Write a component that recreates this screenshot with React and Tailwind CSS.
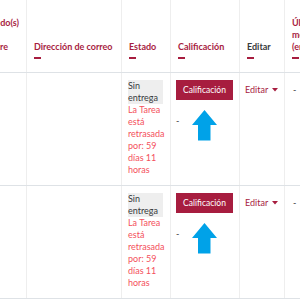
const RED = 'text-[#a71d3f]'

function Dash({ hide }) {
  return <div className={`mt-[4px] h-[2px] w-[7px] ${hide ? '' : 'bg-[#a71d3f]'}`} />
}

function HeadCell({ w, children, dark, clip }) {
  return (
    <div className={`flex h-[72px] shrink-0 flex-col justify-end overflow-hidden border-r border-[#eeeeee] pb-[13px] ${clip ? 'pr-[7px]' : 'px-[7px]'} ${w}`}>
      <div className={`whitespace-nowrap text-[9px] font-bold leading-[12px] ${dark ? 'text-[#373a3c]' : RED} ${clip ? 'text-right' : ''}`}>{children}</div>
      <Dash hide={clip} />
    </div>
  )
}

function Arrow() {
  return (
    <svg width="27" height="31" viewBox="0 0 27 31" className="ml-[12px] -mt-[5px]">
      <path d="M13.5 0 L26 15 L19.5 15 L19.5 30.5 L7 30.5 L7 15 L1 15 Z" fill="#00a2e8" />
    </svg>
  )
}

function Row() {
  return (
    <div className="flex h-[113px] border-b border-[#dee2e6] text-[9px] leading-[12px]">
      <div className="w-[27px] shrink-0 border-r border-[#eeeeee]" />
      <div className="w-[95px] shrink-0 border-r border-[#eeeeee]" />
      <div className="w-[49px] shrink-0 border-r border-[#eeeeee] pl-[6px] pt-[7px]">
        <div className="w-[35px] bg-[#eeeeee] text-[#373a3c]">Sin<br />entrega</div>
        <div className="text-[#f4505c]">La Tarea<br />está<br />retrasada<br />por: 59<br />días 11<br />horas</div>
      </div>
      <div className="w-[69px] shrink-0 border-r border-[#eeeeee] pl-[5px] pt-[7px]">
        <div className="flex h-[20px] w-[57px] items-center justify-center bg-[#a71d3f] text-[8.5px] text-white">Calificación</div>
        <div className="mt-[15px] flex items-start">
          <span className="text-[#373a3c]">-</span>
          <Arrow />
        </div>
      </div>
      <div className="w-[45px] shrink-0 border-r border-[#eeeeee] pl-[5px] pt-[11px]">
        <span className="flex items-center gap-[4px] text-[#a71d3f]">Editar
          <svg width="6" height="4" viewBox="0 0 6 4"><path d="M0 0 L6 0 L3 3.5 Z" fill="#a71d3f" /></svg>
        </span>
      </div>
      <div className="pl-[8px] pt-[11px] text-[#373a3c]">-</div>
    </div>
  )
}

export default function App() {
  return (
    <div className="h-[300px] w-[300px] overflow-hidden bg-white" style={{ fontFamily: 'Lato, "Open Sans", sans-serif' }}>
      <div className="w-[330px]">
        <div className="flex border-b border-[#dee2e6]">
          <HeadCell w="w-[27px]" clip>
            <div>do(s)</div>
            <div>&nbsp;</div>
            <div className="pr-[11px]">re</div>
          </HeadCell>
          <HeadCell w="w-[95px]">Dirección de correo</HeadCell>
          <HeadCell w="w-[49px]">Estado</HeadCell>
          <HeadCell w="w-[69px]">Calificación</HeadCell>
          <HeadCell w="w-[45px]" dark>Editar</HeadCell>
          <HeadCell w="w-[45px]">Última<br />modificación<br />(entrega)</HeadCell>
        </div>
        <Row />
        <Row />
      </div>
    </div>
  )
}
